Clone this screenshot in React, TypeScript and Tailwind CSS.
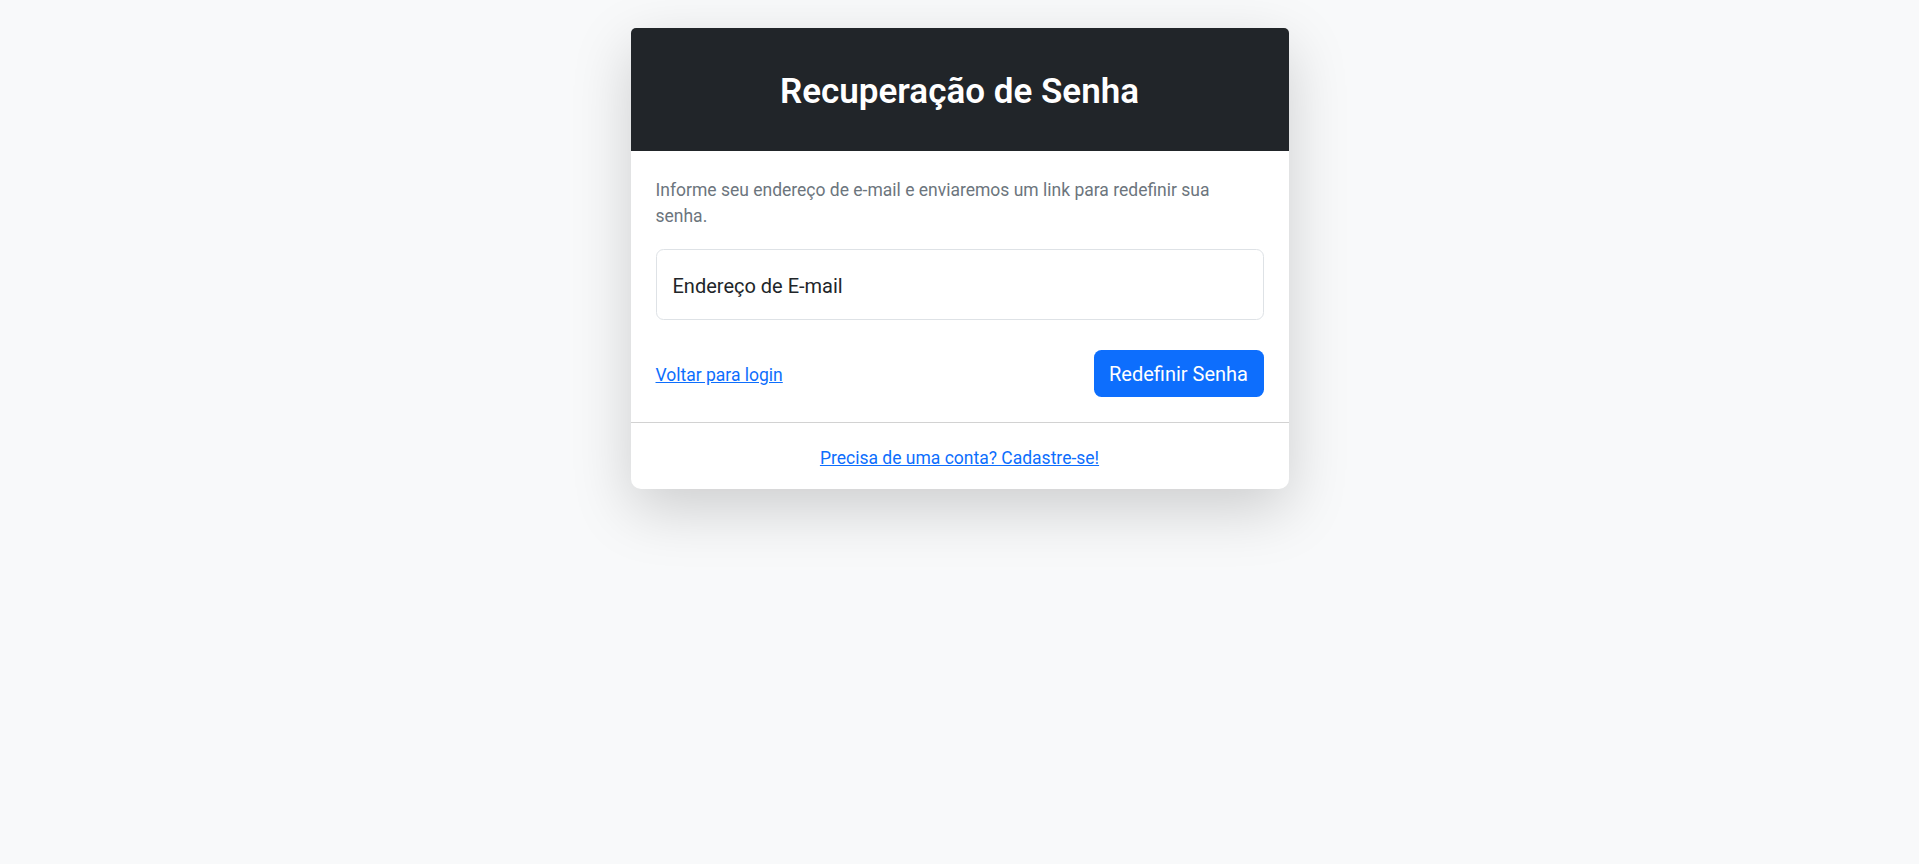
export default function App() {
  return (
    <div className="min-h-screen bg-[#f8f9fa] font-['Roboto',sans-serif]">
      <div className="flex flex-col items-center pt-[28px]">
        <div className="w-[658px] rounded-b-[10px] rounded-t-[5px] bg-white shadow-[0_20px_60px_rgba(0,0,0,0.175)]">
          <div className="flex h-[123px] items-center justify-center rounded-t-[5px] bg-[#212529] pt-[5px]">
            <h3 className="text-[35px] font-semibold leading-[42px] text-white">Recuperação de Senha</h3>
          </div>
          <div className="px-[25px] pb-[25px] pt-[26px]">
            <p className="mb-[19px] text-[17.5px] leading-[26.25px] text-[#6c757d]">
              Informe seu endereço de e-mail e enviaremos um link para redefinir sua senha.
            </p>
            <input
              type="email"
              placeholder="Endereço de E-mail"
              className="h-[71px] w-full rounded-[7.5px] border border-[#dee2e6] px-[16px] pt-[3px] text-[20px] text-[#212529] outline-none placeholder:text-[#212529]"
            />
            <div className="mt-[30px] flex items-center justify-between">
              <a href="#" className="pt-[4px] text-[17.5px] text-[#0d6efd] underline">
                Voltar para login
              </a>
              <button type="button" className="h-[47px] w-[170px] rounded-[7.5px] bg-[#0d6efd] pt-[2px] text-[20px] leading-[30px] text-white">
                Redefinir Senha
              </button>
            </div>
          </div>
          <div className="border-t border-[rgba(0,0,0,0.175)] pb-[18px] pt-[22px] text-center">
            <a href="#" className="text-[17.5px] leading-[26.25px] text-[#0d6efd] underline">
              Precisa de uma conta? Cadastre-se!
            </a>
          </div>
        </div>
      </div>
    </div>
  );
}
